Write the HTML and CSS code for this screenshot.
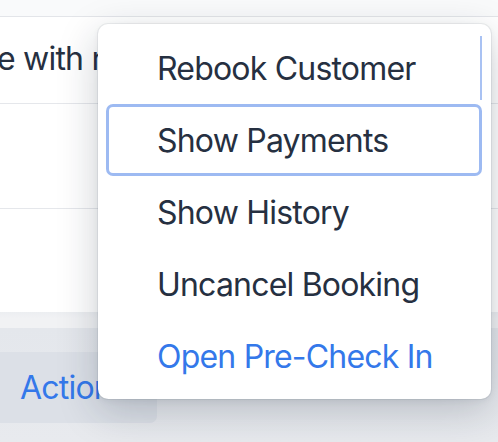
FILE: index.html
```html
<!DOCTYPE html>
<html>
<head>
<meta charset="utf-8">
<link rel="stylesheet" href="styles.css">
</head>
<body>
<div class="page">
  <div class="topbar"></div>
  <div class="card">
    <div class="row row-first"><span class="cell-text">e with notes</span></div>
    <div class="row row-mid"></div>
    <div class="row row-last"></div>
  </div>
  <div class="gap"></div>
  <div class="footer">
    <button class="actions-btn">Actions</button>
  </div>

  <div class="menu">
    <div class="menu-item item-first">Rebook Customer</div>
    <div class="menu-item item-focus">Show Payments</div>
    <div class="menu-item">Show History</div>
    <div class="menu-item">Uncancel Booking</div>
    <div class="menu-item item-link">Open Pre-Check In</div>
  </div>
</div>
</body>
</html>
```

FILE: styles.css
```css
* { box-sizing: border-box; }

html, body {
  margin: 0;
  padding: 0;
}

body {
  width: 498px;
  height: 442px;
  overflow: hidden;
  font-family: Inter, "Noto Sans", sans-serif;
  background: #e8eaee;
}

.page {
  position: relative;
  width: 498px;
  height: 442px;
  display: flex;
  flex-direction: column;
}

.topbar {
  height: 17px;
  background: #f9fafb;
  border-bottom: 1px solid #e3e5e9;
}

.card {
  background: #ffffff;
  display: flex;
  flex-direction: column;
}

.row {
  display: flex;
  align-items: center;
  border-bottom: 1px solid #e5e7eb;
}

.row-first { height: 87px; }
.row-mid { height: 105px; }
.row-last { height: 103px; border-bottom: none; }

.cell-text {
  font-size: 32px;
  letter-spacing: -0.8px;
  color: #263041;
  white-space: nowrap;
  margin-left: -3px;
  padding-bottom: 4px;
}

.gap {
  height: 16px;
  background: linear-gradient(#eceef1, #f1f2f4 40%, #f1f2f4);
}

.footer {
  flex: 1;
  background: linear-gradient(#e4e7ec, #e8eaee);
  padding-top: 24px;
}

.actions-btn {
  display: block;
  width: 157px;
  height: 71px;
  border: none;
  border-radius: 0 7px 7px 0;
  background: #dce0e7;
  color: #3478ea;
  font-family: Inter, "Noto Sans", sans-serif;
  font-size: 32px;
  letter-spacing: -0.8px;
  text-align: left;
  padding: 0 0 0 20px;
}

.menu {
  position: absolute;
  left: 98px;
  top: 24px;
  width: 393px;
  height: 375px;
  background: #ffffff;
  border-radius: 10px;
  box-shadow: 0 0 0 1px rgba(20, 30, 50, 0.06), 0 12px 40px rgba(20, 30, 50, 0.22), 0 2px 6px rgba(20, 30, 50, 0.06);
  padding: 8px 9px 7px 8px;
  display: flex;
  flex-direction: column;
}

.menu-item {
  position: relative;
  height: 72px;
  display: flex;
  align-items: center;
  padding-left: 51px;
  font-size: 32px;
  letter-spacing: -0.8px;
  color: #263041;
  border-radius: 7px;
  white-space: nowrap;
}

.item-first::after {
  content: "";
  position: absolute;
  right: 0;
  top: 4px;
  bottom: 4px;
  width: 2px;
  background: #a9c2f3;
}

.item-focus {
  box-shadow: inset 0 0 0 3px #9dbaf2;
}

.item-link {
  color: #3478ea;
}
```
